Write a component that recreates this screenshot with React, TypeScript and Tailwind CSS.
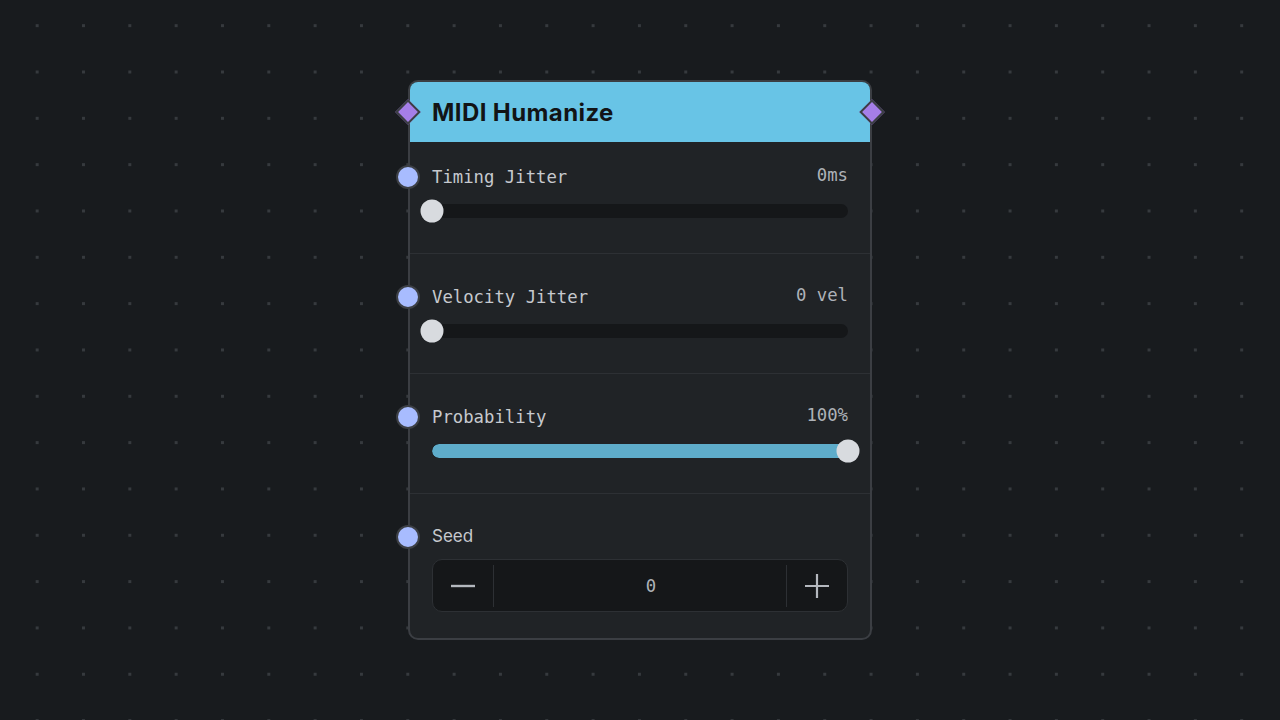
const mono = 'font-["DejaVu_Sans_Mono",monospace]';

function Handle() {
  return (
    <span className="absolute left-[-36px] top-1/2 -translate-y-1/2 w-6 h-6 rounded-full bg-[#a8bcff] border-2 border-[#3c3f44]" />
  );
}

function SliderRow({ label, value, pct, first }: { label: string; value: string; pct: number; first?: boolean }) {
  return (
    <div className={`px-[22px] ${first ? 'pt-[23px]' : 'pt-[31px]'} pb-[30px] border-b border-[#2d3034]`}>
      <div className="relative flex items-center justify-between h-6">
        <Handle />
        <span className={`${mono} text-[17.3px] text-[#c6c9ce] translate-y-[1px]`}>{label}</span>
        <span className={`${mono} text-[17.3px] text-[#aeb2b8] -translate-y-[1px]`}>{value}</span>
      </div>
      <div className="relative h-6 mt-[10px] flex items-center">
        <div className="w-full h-[14px] rounded-full bg-[#151719] overflow-hidden">
          <div className="h-full rounded-full bg-[#5eacca]" style={{ width: `${pct}%` }} />
        </div>
        <span
          className="absolute top-1/2 -translate-y-1/2 -translate-x-1/2 w-[23px] h-[23px] rounded-full bg-[#d8dbdf]"
          style={{ left: `${pct}%` }}
        />
      </div>
    </div>
  );
}

export default function App() {
  return (
    <div className="w-[1280px] h-[720px] flex items-center justify-center bg-[#181b1e] bg-[radial-gradient(circle,#363a3e_1.4px,transparent_1.8px)] bg-[length:46.33px_46.33px] bg-[position:14px_2.5px]">
      <div className="relative w-[464px] rounded-[10px] border-2 border-[#3b3e43] bg-[#202326]">
        <div className="relative h-[60px] flex items-center px-[22px] rounded-t-[8px] bg-[#68c4e6]">
          <span className="absolute left-[-2px] top-1/2 -translate-x-1/2 -translate-y-1/2 w-[18px] h-[18px] rotate-45 bg-[#a57ee8] border-2 border-[#3b3e43]" />
          <h1 className="font-['Inter',sans-serif] font-bold text-[24px] tracking-[0.4px] text-[#121416] translate-y-[1px]">MIDI Humanize</h1>
          <span className="absolute right-[-2px] top-1/2 translate-x-1/2 -translate-y-1/2 w-[18px] h-[18px] rotate-45 bg-[#a57ee8] border-2 border-[#3b3e43]" />
        </div>

        <SliderRow label="Timing Jitter" value="0ms" pct={0} first />
        <SliderRow label="Velocity Jitter" value="0 vel" pct={0} />
        <SliderRow label="Probability" value="100%" pct={100} />

        <div className="px-[22px] pt-[31px] pb-[26px]">
          <div className="relative flex items-center h-6">
            <Handle />
            <span className="font-['Inter',sans-serif] text-[17px] text-[#c6c9ce]">Seed</span>
          </div>
          <div className="mt-[10px] h-[53px] flex items-center rounded-[10px] border border-[#2d3034] bg-[#151719]">
            <button className="w-[60px] h-full flex items-center justify-center text-[#b4b8be]">
              <svg width="24" height="24" viewBox="0 0 24 24" stroke="currentColor" strokeWidth="2.4" fill="none">
                <path d="M0 12h24" />
              </svg>
            </button>
            <span className="w-px h-[42px] bg-[#2d3034]" />
            <span className={`flex-1 pl-[22px] text-center ${mono} text-[17.3px] text-[#aeb2b8] translate-y-[1px]`}>0</span>
            <span className="w-px h-[42px] bg-[#2d3034]" />
            <button className="w-[60px] h-full flex items-center justify-center text-[#b4b8be]">
              <svg width="24" height="24" viewBox="0 0 24 24" stroke="currentColor" strokeWidth="2.2" fill="none">
                <path d="M0 12h24M12 0v24" />
              </svg>
            </button>
          </div>
        </div>
      </div>
    </div>
  );
}
